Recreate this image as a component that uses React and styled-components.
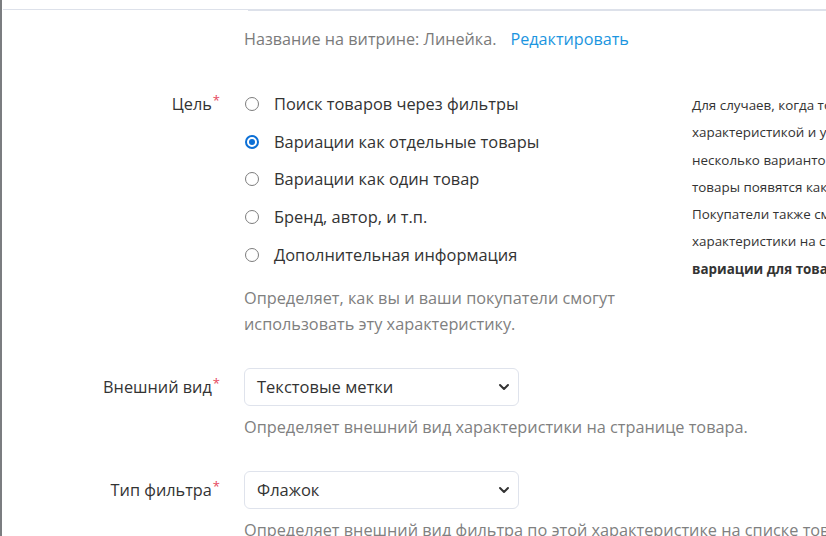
import React from "react";
import styled, { createGlobalStyle } from "styled-components";

const Global = createGlobalStyle`
  html, body { margin: 0; padding: 0; background: #fff; overflow: hidden; }
  body { font-family: "Open Sans", "Noto Sans", sans-serif; color: #333; }
`;

const Page = styled.div`
  display: flex;
  width: 826px;
  height: 536px;
  overflow: hidden;
`;

const EdgeStrip = styled.div`
  width: 2px;
  flex: none;
  background: #7b7d80;
`;

const Content = styled.div`
  flex: 1;
  min-width: 0;
  padding-left: 1px;
`;

const TopRule = styled.div`
  display: flex;
  align-items: flex-start;
`;

const RuleLeft = styled.div`
  width: 245px;
  height: 9px;
  border-bottom: 1px solid #dde1ea;
`;

const RuleField = styled.div`
  flex: 1;
  height: 9px;
  border-bottom: 2px solid #dde1ea;
`;

const Row = styled.div`
  display: grid;
  grid-template-columns: 217px 424px 320px;
  column-gap: 24px;
  margin-top: ${(p) => p.$mt || 0}px;
`;

const Label = styled.div`
  text-align: right;
  font-size: 16.3px;
  line-height: 22px;
  padding-top: ${(p) => p.$pt || 0}px;
  white-space: nowrap;
`;

const Star = styled.span`
  color: #e5475d;
  font-size: 13px;
  vertical-align: top;
  line-height: 14px;
  margin-left: 1px;
`;

const Control = styled.div`
  grid-column: 2;
  display: flex;
  flex-direction: column;
`;

const NameLine = styled.div`
  font-size: 16.2px;
  line-height: 22px;
  color: #7a7a7a;
  display: flex;
  gap: 14px;
  white-space: nowrap;
`;

const Link = styled.a`
  color: #1b95e0;
  text-decoration: none;
`;

const RadioList = styled.div`
  display: flex;
  flex-direction: column;
  gap: 15.7px;
`;

const RadioRow = styled.label`
  display: flex;
  align-items: center;
  gap: 15px;
  font-size: 16.4px;
  line-height: 22px;
  color: #333;
  white-space: nowrap;
`;

const RadioCircle = styled.span`
  width: 14px;
  height: 14px;
  box-sizing: border-box;
  border-radius: 50%;
  border: ${(p) => (p.$checked ? "2px solid #0b6fd6" : "1px solid #7d7d7d")};
  margin-left: 1px;
  display: flex;
  align-items: center;
  justify-content: center;
  flex: none;
  &::after {
    content: "";
    width: 6px;
    height: 6px;
    border-radius: 50%;
    background: ${(p) => (p.$checked ? "#0b6fd6" : "transparent")};
  }
`;

const Hint = styled.div`
  font-size: 16.3px;
  line-height: 26px;
  color: #808080;
  margin-top: ${(p) => p.$mt || 0}px;
  white-space: nowrap;
`;

const Aside = styled.div`
  grid-column: 3;
  font-size: 13.4px;
  line-height: 27.3px;
  color: #333;
  margin-top: -1px;
`;

const AsideLine = styled.div`
  white-space: nowrap;
  font-weight: ${(p) => (p.$bold ? 700 : 400)};
`;

const SelectBox = styled.div`
  width: 275px;
  height: 38px;
  box-sizing: border-box;
  border: 1px solid #dfe3ec;
  border-radius: 6px;
  display: flex;
  align-items: center;
  justify-content: space-between;
  padding: 0 8px 0 12px;
  font-size: 16.5px;
  color: #333;
`;

const Chevron = () => (
  <svg width="12" height="12" viewBox="0 0 12 12">
    <path d="M2 4 L6 8 L10 4" fill="none" stroke="#333" strokeWidth="2" strokeLinecap="round" strokeLinejoin="round" />
  </svg>
);

const options = [
  "Поиск товаров через фильтры",
  "Вариации как отдельные товары",
  "Вариации как один товар",
  "Бренд, автор, и т.п.",
  "Дополнительная информация",
];

const asideLines = [
  "Для случаев, когда товары различаются",
  "характеристикой и у каждого есть",
  "несколько вариантов. Отдельные",
  "товары появятся как варианты товара.",
  "Покупатели также смогут выбирать",
  "характеристики на странице товара.",
];

export default function App() {
  return (
    <>
      <Global />
      <Page>
        <EdgeStrip />
        <Content>
          <TopRule>
            <RuleLeft />
            <RuleField />
          </TopRule>
          <Row $mt={17}>
            <Control>
              <NameLine>
                <span>Название на витрине: Линейка.</span>
                <Link href="#">Редактировать</Link>
              </NameLine>
            </Control>
          </Row>
          <Row $mt={43}>
            <Label>
              Цель<Star>*</Star>
            </Label>
            <Control>
              <RadioList>
                {options.map((o, i) => (
                  <RadioRow key={o}>
                    <RadioCircle $checked={i === 1} />
                    {o}
                  </RadioRow>
                ))}
              </RadioList>
              <Hint $mt={19}>
                Определяет, как вы и ваши покупатели смогут
                <br />
                использовать эту характеристику.
              </Hint>
            </Control>
            <Aside>
              {asideLines.map((l) => (
                <AsideLine key={l}>{l}</AsideLine>
              ))}
              <AsideLine $bold>вариации для товара</AsideLine>
            </Aside>
          </Row>
          <Row $mt={31}>
            <Label $pt={8}>
              Внешний вид<Star>*</Star>
            </Label>
            <Control>
              <SelectBox>
                <span>Текстовые метки</span>
                <Chevron />
              </SelectBox>
              <Hint $mt={8}>Определяет внешний вид характеристики на странице товара.</Hint>
            </Control>
          </Row>
          <Row $mt={31}>
            <Label $pt={8}>
              Тип фильтра<Star>*</Star>
            </Label>
            <Control>
              <SelectBox>
                <span>Флажок</span>
                <Chevron />
              </SelectBox>
              <Hint $mt={8}>Определяет внешний вид фильтра по этой характеристике на списке товаров.</Hint>
            </Control>
          </Row>
        </Content>
      </Page>
    </>
  );
}
